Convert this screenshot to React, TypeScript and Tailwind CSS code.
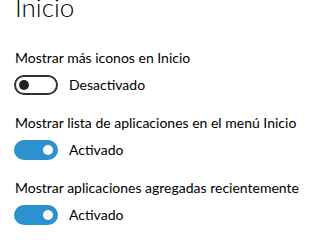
import React from 'react';

type Row = { label: string; on: boolean };

const rows: Row[] = [
  { label: 'Mostrar más iconos en Inicio', on: false },
  { label: 'Mostrar lista de aplicaciones en el menú Inicio', on: true },
  { label: 'Mostrar aplicaciones agregadas recientemente', on: true },
];

function Toggle({ on }: { on: boolean }) {
  if (on) {
    return (
      <div className="flex h-5 w-11 shrink-0 items-center justify-end rounded-full bg-[#2b92cf] pr-[5px]">
        <div className="h-[10px] w-[10px] rounded-full bg-white" />
      </div>
    );
  }
  return (
    <div className="flex h-5 w-11 shrink-0 items-center rounded-full border-2 border-[#333333] pl-[3px]">
      <div className="h-[10px] w-[10px] rounded-full bg-[#222222]" />
    </div>
  );
}

export default function App() {
  return (
    <div
      className="h-[240px] w-[320px] overflow-hidden bg-white px-[14px] text-[#000000]"
      style={{ fontFamily: 'Lato, "Noto Sans", sans-serif' }}
    >
      <h1 className="-mt-[6px] pl-px text-[26px] font-light leading-[26px]">Inicio</h1>
      <div className="mt-[28px] flex flex-col">
        {rows.map((r) => (
          <div key={r.label} className="flex h-[65px] flex-col">
            <div className="pl-px text-[14px] leading-5 whitespace-nowrap">{r.label}</div>
            <div className="mt-[7px] flex items-center gap-[11px]">
              <Toggle on={r.on} />
              <span className="text-[14px] leading-5">{r.on ? 'Activado' : 'Desactivado'}</span>
            </div>
          </div>
        ))}
      </div>
    </div>
  );
}
